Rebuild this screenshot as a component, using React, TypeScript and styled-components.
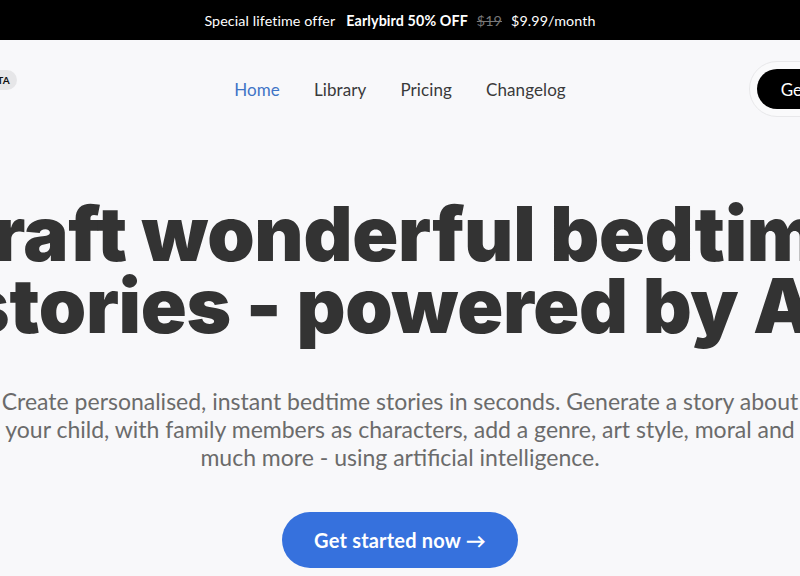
import React from "react";
import styled, { createGlobalStyle } from "styled-components";

const Global = createGlobalStyle`
  html, body { margin: 0; padding: 0; background: #f8f8fa; }
  body { font-family: Lato, "Noto Sans", sans-serif; color: #333; overflow-x: hidden; }
  * { box-sizing: border-box; }
`;

const Page = styled.div`
  width: 100%;
  overflow: hidden;
  min-height: 576px;
`;

const Banner = styled.div`
  height: 40px;
  background: #000;
  color: #fff;
  display: flex;
  align-items: center;
  justify-content: center;
  gap: 9px;
  font-size: 14.3px;
  letter-spacing: 0.1px;
`;

const Strong = styled.span`
  font-weight: 700;
  margin-left: 2px;
`;

const Old = styled.span`
  color: #777;
  text-decoration: line-through;
`;

const Wide = styled.div`
  width: 1060px;
  margin-left: calc(50% - 530px);
`;

const Nav = styled.nav`
  height: 98px;
  padding: 0 33px;
  display: grid;
  grid-template-columns: 1fr auto 1fr;
  align-items: center;
`;

const Brand = styled.div`
  display: flex;
  align-items: center;
  gap: 8px;
  margin-top: -18px;
  font-weight: 800;
  font-size: 16px;
  color: #222;
`;

const Badge = styled.span`
  background: #e6e6e8;
  color: #111;
  font-size: 10px;
  font-weight: 700;
  border-radius: 10px;
  padding: 4px 7px;
  letter-spacing: 0.3px;
`;

const Links = styled.div`
  display: flex;
  gap: 34px;
`;

const NavLink = styled.a<{ $active?: boolean }>`
  font-size: 17px;
  color: ${(p) => (p.$active ? "#3f74c6" : "#3a3a3a")};
  text-decoration: none;
  letter-spacing: 0.1px;
`;

const Right = styled.div`
  display: flex;
  justify-content: flex-end;
`;

const Ring = styled.div`
  padding: 7px;
  border-radius: 40px;
  background: #fafafb;
  border: 1px solid #e8e8ea;
`;

const DarkButton = styled.button`
  background: #000;
  color: #fff;
  border: none;
  border-radius: 24px;
  height: 40px;
  padding: 0 24px;
  font-family: inherit;
  font-size: 17px;
`;

const Hero = styled.section`
  display: flex;
  flex-direction: column;
  align-items: center;
  padding-top: 59px;
`;

const Title = styled.h1`
  margin: 0;
  font-family: Inter, Lato, sans-serif;
  font-size: 76px;
  line-height: 72px;
  font-weight: 900;
  color: #333;
  text-align: center;
  white-space: nowrap;
  letter-spacing: -0.3px;
`;

const Sub = styled.p`
  margin: 46px 0 0;
  max-width: 810px;
  font-size: 23px;
  line-height: 28px;
  color: #6b6b6b;
  text-align: center;
`;

const Cta = styled.button`
  margin-top: 41px;
  width: 236px;
  height: 56px;
  border: none;
  border-radius: 28px;
  background: #3671dd;
  color: #fff;
  font-family: inherit;
  font-size: 20px;
  font-weight: 700;
  letter-spacing: 0.2px;
`;

export default function App() {
  return (
    <Page>
      <Global />
      <Banner>
        <span>Special lifetime offer</span>
        <Strong>Earlybird 50% OFF</Strong>
        <Old>$19</Old>
        <span>$9.99/month</span>
      </Banner>
      <Wide>
        <Nav>
          <Brand>
            StoryBee <Badge>BETA</Badge>
          </Brand>
          <Links>
            <NavLink $active href="#">Home</NavLink>
            <NavLink href="#">Library</NavLink>
            <NavLink href="#">Pricing</NavLink>
            <NavLink href="#">Changelog</NavLink>
          </Links>
          <Right>
            <Ring>
              <DarkButton>Get started</DarkButton>
            </Ring>
          </Right>
        </Nav>
        <Hero>
          <Title>
            Craft wonderful bedtime
            <br />
            stories - powered by AI
          </Title>
          <Sub>
            Create personalised, instant bedtime stories in seconds. Generate a story about your child, with family
            members as characters, add a genre, art style, moral and much more - using artificial intelligence.
          </Sub>
          <Cta>Get started now →</Cta>
        </Hero>
      </Wide>
    </Page>
  );
}
